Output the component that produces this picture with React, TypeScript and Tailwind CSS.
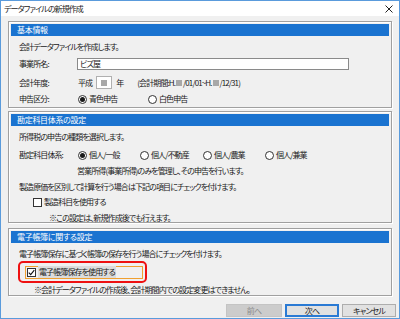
import React from 'react'

const font = "font-['Noto_Sans_CJK_JP','Noto_Sans',sans-serif] [font-feature-settings:'palt']"

function Radio({ checked, label }: { checked?: boolean; label: string }) {
  return (
    <div className="flex items-center gap-[2px]">
      <span className="flex h-[9px] w-[9px] items-center justify-center rounded-full border border-[#333] bg-white">
        {checked && <span className="h-[5px] w-[5px] rounded-full bg-[#1a1a1a]" />}
      </span>
      <span>{label}</span>
    </div>
  )
}

function Check({ label }: { label: string }) {
  return (
    <div className="flex items-center gap-[2px]">
      <span className="flex h-[9px] w-[9px] items-center justify-center border border-[#333] bg-white" />
      <span>{label}</span>
    </div>
  )
}

function Section({ title, className, children }: { title: string; className: string; children: React.ReactNode }) {
  return (
    <div className={`mx-[7px] border border-[#a0a0a0] shadow-[1px_1px_0_#fff,inset_1px_1px_0_#fff] ${className}`}>
      <div className="mx-[2px] h-[12px] bg-[#1a73d0] pl-[6px] text-[8px] leading-[12px] tracking-[-0.3px] text-white">{title}</div>
      {children}
    </div>
  )
}

const Masked = () => <span className="mx-[1px] inline-block h-[6px] w-[6px] bg-[#a8a8a8] align-middle" />

export default function App() {
  return (
    <div className={`flex h-[319px] w-[400px] flex-col border border-[#5a9bdc] bg-[#f0f0f0] text-[8px] leading-[12px] tracking-[-0.9px] text-[#1a1a1a] ${font}`}>
      {/* Title bar */}
      <div className="flex h-[15px] items-center justify-between bg-white pl-[3px] pr-[6px]">
        <span>データファイルの新規作成</span>
        <svg width="8" height="8" viewBox="0 0 8 8" className="mt-[1px]">
          <path d="M0.5 0.5 L7.5 7.5 M7.5 0.5 L0.5 7.5" stroke="#222" strokeWidth="1" />
        </svg>
      </div>

      {/* 基本情報 */}
      <Section title="基本情報" className="mt-[5px] h-[87px] pt-[2px]">
        <div className="mt-[5px] pl-[10px]">会計データファイルを作成します。</div>
        <div className="mt-[4px] flex h-[13px] items-center pl-[10px]">
          <span className="w-[58px]">事業所名:</span>
          <div className="flex h-[12px] w-[272px] items-center border border-[#8a8a8a] bg-white pl-[2px]">ビズ屋</div>
        </div>
        <div className="mt-[6px] flex h-[13px] items-center pl-[10px]">
          <span className="w-[59px]">会計年度:</span>
          <span>平成</span>
          <span className="ml-[4px] flex h-[13px] w-[16px] items-center justify-center border border-[#b0b0b0] bg-white">
            <span className="h-[6px] w-[6px] bg-[#a8a8a8]" />
          </span>
          <span className="ml-[4px]">年</span>
          <span className="ml-[14px]">
            (会計期間:H.<Masked />/01/01~H.<Masked />/12/31)
          </span>
        </div>
        <div className="mt-[4px] flex h-[12px] items-center pl-[10px]">
          <span className="w-[59px]">申告区分:</span>
          <div className="w-[70px]">
            <Radio checked label="青色申告" />
          </div>
          <Radio label="白色申告" />
        </div>
      </Section>

      {/* 勘定科目体系の設定 */}
      <Section title="勘定科目体系の設定" className="mt-[3px] h-[112px] pt-[2px]">
        <div className="mt-[5px] pl-[10px]">所得税の申告の種類を選択します。</div>
        <div className="mt-[6px] flex h-[12px] items-center pl-[10px]">
          <span className="w-[59px]">勘定科目体系:</span>
          <div className="w-[62px]">
            <Radio checked label="個人/一般" />
          </div>
          <div className="w-[63px]">
            <Radio label="個人/不動産" />
          </div>
          <div className="w-[62px]">
            <Radio label="個人/農業" />
          </div>
          <Radio label="個人/兼業" />
        </div>
        <div className="mt-[4px] pl-[68px]">営業所得(事業所得)のみを管理し、その申告を行います。</div>
        <div className="mt-[4px] pl-[10px]">製造原価を区別して計算を行う場合は下記の項目にチェックを付けます。</div>
        <div className="mt-[3px] flex h-[12px] items-center pl-[24px]">
          <Check label="製造科目を使用する" />
        </div>
        <div className="mt-[4px] pl-[40px]">※この設定は、新規作成後でも行えます。</div>
      </Section>

      {/* 電子帳簿に関する設定 */}
      <Section title="電子帳簿に関する設定" className="mt-[5px] h-[68px] pt-[2px]">
        <div className="mt-[5px] pl-[10px]">電子帳簿保存に基づく帳簿の保存を行う場合にチェックを付けます。</div>
        <div className="relative mt-[4px] flex h-[16px] items-center pl-[16px]">
          <div className="flex h-[13px] w-[118px] items-center gap-[2px] border border-[#f0a030] pl-[1px]">
            <span className="flex h-[9px] w-[9px] items-center justify-center border border-[#333] bg-white">
              <svg width="7" height="7" viewBox="0 0 7 7">
                <path d="M0.8 3.6 L2.7 5.6 L6.3 1.2" fill="none" stroke="#111" strokeWidth="1.1" />
              </svg>
            </span>
            <span className="bg-[#dcdcdc] px-[1px]">電子帳簿保存を使用する</span>
          </div>
          <div className="pointer-events-none absolute left-[9px] top-[-3px] h-[22px] w-[129px] rounded-[5px] border-[2.5px] border-[#ee1111]" />
        </div>
        <div className="mt-[4px] pl-[25px]">※会計データファイルの作成後、会計期間内での設定変更はできません。</div>
      </Section>

      {/* Buttons */}
      <div className="mt-[8px] flex justify-end gap-[3px] pr-[3px]">
        <div className="flex h-[13px] w-[56px] items-center justify-center border border-[#c4c4c4] bg-[#cccccc] text-[#8a8a8a]">前へ</div>
        <div className="flex h-[13px] w-[54px] items-center justify-center border border-[#2a7ad4] bg-[#e1e1e1] shadow-[inset_0_0_0_1px_#2a7ad4]">次へ</div>
        <div className="flex h-[13px] w-[54px] items-center justify-center border border-[#adadad] bg-[#e1e1e1]">キャンセル</div>
      </div>
    </div>
  )
}
